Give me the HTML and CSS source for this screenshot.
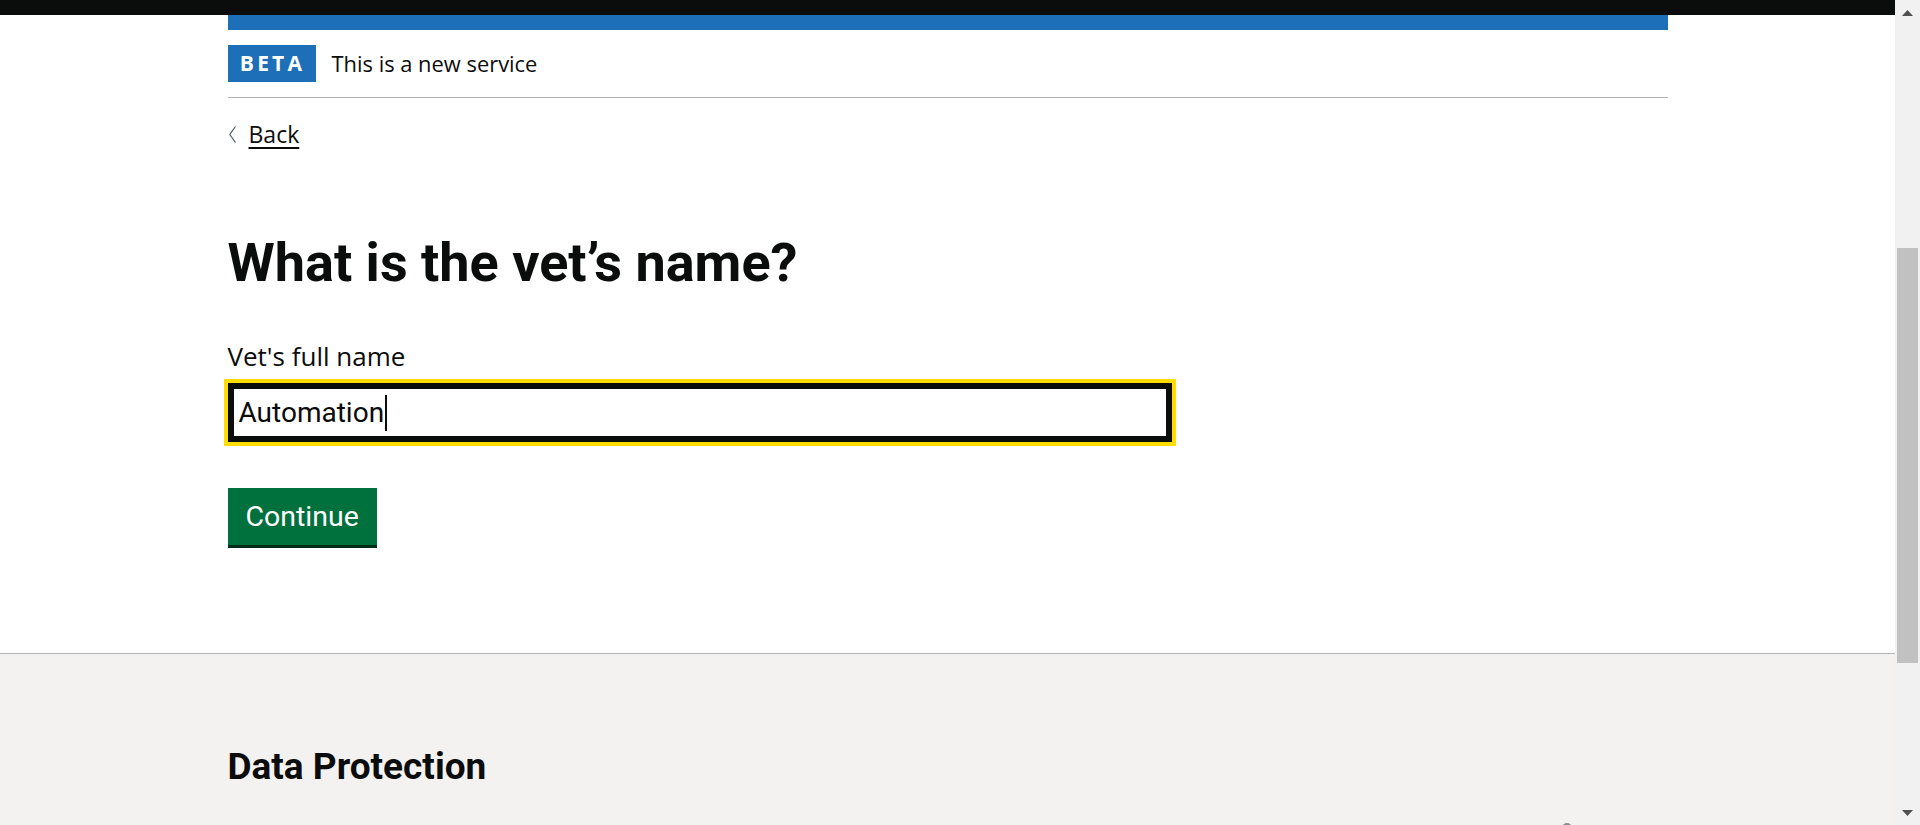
FILE: index.html
```html
<!DOCTYPE html>
<html lang="en">
<head>
<meta charset="utf-8">
<title>What is the vet’s name?</title>
<link rel="stylesheet" href="styles.css">
</head>
<body>
<div class="app">
  <div class="page">
    <header class="header">
      <div class="header-bar"></div>
      <div class="container">
        <div class="service-line"></div>
        <div class="phase-banner">
          <strong class="tag">BETA</strong>
          <span class="phase-text">This is a new service</span>
        </div>
      </div>
    </header>

    <main class="main">
      <div class="container">
        <div class="back-row">
          <a class="back-link" href="#">
            <svg class="chevron" width="8" height="17" viewBox="0 0 8 17" aria-hidden="true"><polyline points="6.5,0.5 0.8,8.5 6.5,16.5" fill="none" stroke="#505a5f" stroke-width="1.2"/></svg>
            <span class="back-text">Back</span>
          </a>
        </div>
        <h1 class="heading">What is the vet’s name?</h1>
        <label class="label" for="vet-name">Vet's full name</label>
        <div class="input" id="vet-name" role="textbox">Automation<span class="caret"></span></div>
        <button class="button" type="button">Continue</button>
      </div>
    </main>

    <footer class="footer">
      <div class="container">
        <h2 class="footer-heading">Data Protection</h2>
        <div class="footer-meta">
          <div class="crown">
            <svg width="30" height="20" viewBox="0 0 30 20" aria-hidden="true"><circle cx="15" cy="5" r="5" fill="#8c8c8c"/></svg>
          </div>
        </div>
      </div>
    </footer>
  </div>

  <div class="scrollbar" aria-hidden="true">
    <div class="sb-btn"><svg width="11" height="6" viewBox="0 0 11 6"><polygon points="5.5,0 11,6 0,6" fill="#505050"/></svg></div>
    <div class="sb-track"><div class="sb-thumb"></div></div>
    <div class="sb-btn"><svg width="11" height="6" viewBox="0 0 11 6"><polygon points="0,0 11,0 5.5,6" fill="#505050"/></svg></div>
  </div>
</div>
</body>
</html>
```

FILE: styles.css
```css
html, body {
  margin: 0;
  padding: 0;
  height: 100%;
  overflow: hidden;
  background: #ffffff;
}

body {
  font-family: "Open Sans", "Liberation Sans", Arial, sans-serif;
  color: #0b0c0c;
}

.app {
  display: grid;
  grid-template-columns: 1fr 25px;
  height: 100vh;
}

.page {
  overflow: hidden;
  display: flex;
  flex-direction: column;
}

.container {
  width: 1440px;
  margin: 0 auto;
}

/* Header */
.header-bar {
  height: 15px;
  background: #0b0c0c;
}

.service-line {
  height: 15px;
  background: #1d70b8;
}

.phase-banner {
  display: flex;
  align-items: center;
  gap: 16px;
  padding: 15px 0;
  border-bottom: 1px solid #b1b4b6;
}

.tag {
  display: flex;
  align-items: center;
  justify-content: center;
  width: 88px;
  height: 37px;
  background: #1d70b8;
  color: #ffffff;
  font-family: "Open Sans", Arial, sans-serif;
  font-weight: 700;
  font-size: 21px;
  line-height: 1;
  letter-spacing: 3.2px;
  padding-left: 2px;
  box-sizing: border-box;
}

.phase-text {
  font-size: 21.9px;
  line-height: 1.25;
}

/* Main */
.main {
  padding-bottom: 108px;
}

.back-row {
  margin-top: 22px;
  height: 28.6px;
}

.back-link {
  display: inline-flex;
  align-items: center;
  gap: 12px;
  color: #0b0c0c;
  font-size: 23px;
  line-height: 28.6px;
  text-decoration: none;
}

.chevron {
  margin-left: 1px;
  display: block;
}

.back-text {
  text-decoration: underline;
  text-decoration-thickness: 2px;
  text-underline-offset: 4px;
}

.heading {
  margin: 84px 0 0;
  font-family: Roboto, "Liberation Sans", Arial, sans-serif;
  font-weight: 700;
  font-size: 54px;
  line-height: 60px;
}

.label {
  display: block;
  margin-top: 47px;
  font-size: 26px;
  line-height: 32.5px;
}

.input {
  display: flex;
  align-items: center;
  box-sizing: border-box;
  width: 944px;
  height: 59px;
  margin-top: 11px;
  padding: 0 5px;
  border: 6px solid #0b0c0c;
  outline: 4px solid #ffdd00;
  background: #ffffff;
  font-family: Roboto, "Liberation Sans", Arial, sans-serif;
  font-size: 28px;
  line-height: normal;
  color: #0b0c0c;
}

.caret {
  display: inline-block;
  width: 2px;
  height: 36px;
  margin-left: 1px;
  background: #0b0c0c;
}

.button {
  display: block;
  margin-top: 46px;
  height: 57px;
  padding: 0 18px;
  border: 0;
  border-radius: 0;
  background: #00703c;
  box-shadow: 0 3px 0 #002d18;
  color: #ffffff;
  font-family: Roboto, "Liberation Sans", Arial, sans-serif;
  font-size: 28.5px;
  line-height: 57px;
  cursor: pointer;
}

/* Footer */
.footer {
  flex: 1;
  background: #f3f2f1;
  border-top: 1px solid #b1b4b6;
}

.footer-heading {
  margin: 93px 0 0;
  font-family: Roboto, "Liberation Sans", Arial, sans-serif;
  font-weight: 700;
  font-size: 37px;
  line-height: 40px;
}

.footer-meta {
  display: flex;
  justify-content: flex-end;
  margin-top: 36px;
}

.crown {
  width: 201px;
  display: flex;
  justify-content: center;
}

/* Scrollbar */
.scrollbar {
  display: flex;
  flex-direction: column;
  background: #f1f1f1;
  height: 100vh;
}

.sb-btn {
  height: 25px;
  display: flex;
  align-items: center;
  justify-content: center;
}

.sb-btn svg {
  display: block;
}

.sb-track {
  flex: 1;
  display: flex;
  justify-content: center;
}

.sb-thumb {
  width: 21px;
  height: 415px;
  margin-top: 223px;
  background: #c1c1c1;
}
```
